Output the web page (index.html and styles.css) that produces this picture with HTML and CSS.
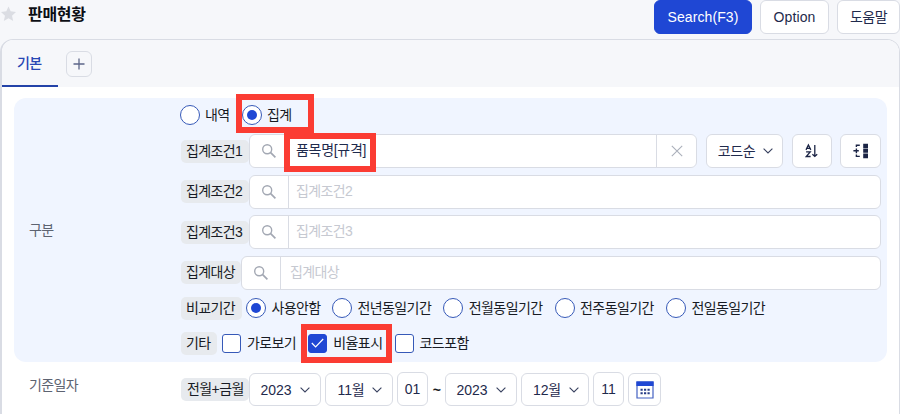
FILE: index.html
```html
<!DOCTYPE html>
<html lang="ko">
<head>
    <meta charset="UTF-8">
    <meta name="viewport" content="width=device-width, initial-scale=1.0">
    <title>판매현황</title>
    <link rel="stylesheet" href="styles.css">
</head>
<body>
    <svg class="sprite" width="0" height="0">
        <symbol id="search" viewBox="0 0 16 16">
            <circle cx="6.2" cy="6.2" r="4.5" fill="none" stroke="currentColor" stroke-width="1.4"/>
            <path d="M9.4 9.4L14.4 14.4" stroke="currentColor" stroke-width="1.7"/>
        </symbol>
        <symbol id="chevron" viewBox="0 0 10 6">
            <path d="M0.6 0.6L5 5L9.4 0.6" fill="none" stroke="currentColor" stroke-width="1.1"/>
        </symbol>
    </svg>

    <header class="page-header">
        <svg class="star" viewBox="0 0 16 16"><path d="M8.5 0.4L10.7 5.3L16 6L12 9.7L13.2 15L8.5 12.3L3.8 15L5 9.7L1 6L6.3 5.3Z" fill="#dbdde3"/></svg>
        <h1>판매현황</h1>
        <div class="header-buttons">
            <button class="btn btn-primary">Search(F3)</button>
            <button class="btn btn-option">Option</button>
            <button class="btn btn-help">도움말</button>
        </div>
    </header>

    <main class="panel">
        <nav class="tabs">
            <a class="tab">기본</a>
            <button class="btn tab-add"><svg width="12" height="12" viewBox="0 0 12 12"><path d="M6 0.5V11.5M0.5 6H11.5" stroke="#5c6689" stroke-width="1.3"/></svg></button>
        </nav>

        <section class="group">
            <div class="group-title">구분</div>
            <div class="group-body">
                <div class="row row-type">
                    <label class="choice choice-type"><span class="radio"></span>내역</label>
                    <label class="choice"><span class="radio checked"></span>집계</label>
                </div>
                <div class="row row-field">
                    <span class="badge badge-wide">집계조건1</span>
                    <div class="field field-short">
                        <span class="field-icon"><svg width="16" height="16"><use href="#search"/></svg></span>
                        <span class="field-text field-value">품목명[규격]</span>
                        <span class="field-clear"><svg width="12" height="12" viewBox="0 0 12 12"><path d="M0.8 0.8L11.2 11.2M11.2 0.8L0.8 11.2" stroke="#abb0bb" stroke-width="1.1"/></svg></span>
                    </div>
                    <button class="btn select sort-select">코드순 <svg class="chevron"><use href="#chevron"/></svg></button>
                    <button class="btn icon-btn">
                        <svg width="14" height="16" viewBox="0 0 14 16" fill="none" stroke="#1b2445">
                            <path d="M1 6.9L3.4 2L5.8 6.9M1.8 5.4H5M1.1 8.9H5.2L1.2 13.5H5.6" stroke-width="1.3"/>
                            <path d="M9.8 2V13.5M7.4 11.2L9.8 13.4L12.2 11.2" stroke-width="1.3"/>
                        </svg>
                    </button>
                    <button class="btn icon-btn">
                        <svg width="16" height="16" viewBox="0 0 16 16">
                            <path d="M6.8 2.2H3.4V4M3.4 11.6V13.4H6.8M0.4 7.8H5.8M3.4 5.4V10.2" fill="none" stroke="#1b2445" stroke-width="1.4"/>
                            <path d="M10.2 0.8H15V4.9H10.2ZM10.2 5.6H15V9.7H10.2ZM10.2 10.4H15V15.2H10.2Z" fill="#1b2445"/>
                        </svg>
                    </button>
                </div>
                <div class="row row-field">
                    <span class="badge badge-wide">집계조건2</span>
                    <div class="field">
                        <span class="field-icon"><svg width="16" height="16"><use href="#search"/></svg></span>
                        <span class="field-text placeholder">집계조건2</span>
                    </div>
                </div>
                <div class="row row-field">
                    <span class="badge badge-wide">집계조건3</span>
                    <div class="field">
                        <span class="field-icon"><svg width="16" height="16"><use href="#search"/></svg></span>
                        <span class="field-text placeholder">집계조건3</span>
                    </div>
                </div>
                <div class="row row-field">
                    <span class="badge badge-target">집계대상</span>
                    <div class="field field-target">
                        <span class="field-icon"><svg width="16" height="16"><use href="#search"/></svg></span>
                        <span class="field-text placeholder">집계대상</span>
                    </div>
                </div>
                <div class="row row-period">
                    <span class="badge badge-period">비교기간</span>
                    <label class="choice choice-none"><span class="radio checked"></span>사용안함</label>
                    <label class="choice choice-period"><span class="radio"></span>전년동일기간</label>
                    <label class="choice choice-period"><span class="radio"></span>전월동일기간</label>
                    <label class="choice choice-period"><span class="radio"></span>전주동일기간</label>
                    <label class="choice choice-period"><span class="radio"></span>전일동일기간</label>
                </div>
                <div class="row row-etc">
                    <span class="badge badge-etc">기타</span>
                    <label class="choice choice-check"><span class="checkbox"></span>가로보기</label>
                    <label class="choice choice-check"><span class="checkbox checked"><svg width="13" height="10" viewBox="0 0 13 10"><path d="M0.8 5L4.6 8.8L12.2 1" fill="none" stroke="#fff" stroke-width="1.2"/></svg></span>비율표시</label>
                    <label class="choice"><span class="checkbox"></span>코드포함</label>
                </div>
            </div>
        </section>

        <section class="date-group">
            <div class="group-title date-title">기준일자</div>
            <div class="row row-date">
                <span class="badge badge-date">전월+금월</span>
                <button class="btn select year">2023 <svg class="chevron"><use href="#chevron"/></svg></button>
                <button class="btn select month">11월 <svg class="chevron"><use href="#chevron"/></svg></button>
                <span class="day">01</span>
                <span class="tilde">~</span>
                <button class="btn select year">2023 <svg class="chevron"><use href="#chevron"/></svg></button>
                <button class="btn select month">12월 <svg class="chevron"><use href="#chevron"/></svg></button>
                <span class="day">11</span>
                <button class="btn calendar">
                    <svg width="18" height="18" viewBox="0 0 18 18">
                        <path d="M1 1H17V17H1Z" fill="#fff" stroke="#4361c2" stroke-width="1.2"/>
                        <path d="M0.4 0.4H17.6V5H0.4Z" fill="#1f47d4"/>
                        <path d="M4.5 8.7H13.8M4.5 12.2H13.8" stroke="#263c86" stroke-width="2.1" stroke-dasharray="2.2 1.3"/>
                    </svg>
                </button>
            </div>
        </section>
    </main>

    <!-- Highlight boxes -->
    <div class="mark mark-summary"></div>
    <div class="mark mark-item"></div>
    <div class="mark mark-ratio"></div>
</body>
</html>
```
FILE: styles.css
```css
* {
    margin: 0;
    padding: 0;
    box-sizing: border-box;
}

body {
    position: relative;
    width: 900px;
    height: 414px;
    overflow: hidden;
    background-color: #f6f7fa;
    color: #181b24;
    font-family: "Liberation Sans", "Noto Sans CJK KR", sans-serif;
    font-size: 14px;
    letter-spacing: -0.6px;
    line-height: 20px;
    white-space: nowrap;
}

svg {
    display: block;
    flex: none;
}

.sprite {
    position: absolute;
}

/* Header */
.page-header {
    display: flex;
    align-items: flex-start;
    height: 39px;
}

.star {
    width: 16px;
    height: 16px;
    margin-top: 6px;
}

.page-header h1 {
    margin: 5px 0 0 12px;
    font-size: 16px;
    font-weight: 700;
    letter-spacing: -0.3px;
    color: #0c0e14;
}

.header-buttons {
    display: flex;
    gap: 8px;
    margin-left: auto;
}

.btn {
    display: flex;
    align-items: center;
    justify-content: center;
    flex: none;
    height: 34px;
    border: 1px solid #d9dce4;
    border-radius: 6px;
    background-color: #fff;
    color: #1f2a4c;
    font: inherit;
    letter-spacing: inherit;
}

.btn-primary {
    width: 98px;
    border-color: #1f47d4;
    background-color: #1f47d4;
    color: #fff;
    letter-spacing: 0.1px;
}

.btn-option {
    width: 69px;
    letter-spacing: 0.1px;
}

.btn-help {
    width: 63px;
}

/* Panel and tabs */
.panel {
    height: 390px;
    border: 1px solid #d9dce4;
    border-left-width: 2px;
    border-radius: 13px;
    background-color: #fff;
    overflow: hidden;
}

.tabs {
    display: flex;
    height: 47px;
    background-color: #f6f7fa;
}

.tab {
    width: 56px;
    padding: 13px 0 0 15px;
    border-bottom: 2px solid #2443a8;
    color: #2746b4;
    font-weight: 500;
}

.tab-add {
    width: 26px;
    height: 26px;
    margin: 11px 0 0 8px;
    background-color: transparent;
}

/* Grouped options */
.group {
    display: flex;
    width: 873px;
    height: 264px;
    margin: 11px 0 0 12px;
    border-radius: 12px;
    background-color: #f0f5ff;
}

.group-title {
    width: 167px;
    padding: 122px 0 0 15px;
    color: #5d6371;
}

.group-body {
    flex: 1;
    padding-right: 6px;
}

.row {
    display: flex;
    align-items: center;
    padding-left: 1px;
}

.row-type {
    height: 34px;
    padding-left: 0;
}

.row-field {
    height: 34px;
    margin-bottom: 6.5px;
}

.row-type + .row-field {
    margin-top: 2px;
}

.badge {
    flex: none;
    height: 23px;
    padding-left: 5px;
    border-radius: 5px;
    background-color: #e7eaee;
    line-height: 23px;
}

.badge-wide {
    width: 68px;
}

.badge-target {
    width: 60px;
}

.badge-period {
    width: 61px;
    margin-right: 4px;
}

.badge-etc {
    width: 36px;
    margin-right: 5px;
}

.badge-date {
    width: 68px;
    padding-left: 6px;
}

.field {
    display: flex;
    flex: 1;
    height: 34px;
    border: 1px solid #d9dce4;
    border-radius: 6px;
    background-color: #fff;
}

.field-short {
    flex: none;
    width: 448px;
    margin-right: 9px;
}

.field-icon {
    display: flex;
    align-items: center;
    justify-content: center;
    width: 39px;
    border-right: 1px solid #d9dce4;
    color: #a3a8b3;
}

.field-text {
    flex: 1;
    padding-left: 7px;
    line-height: 31px;
    color: #1f2a4c;
}

.field-value {
    letter-spacing: -0.3px;
}

.field-target .field-text {
    padding-left: 9px;
}

.field-text.placeholder {
    color: #c6c9d1;
}

.field-clear {
    display: flex;
    align-items: center;
    justify-content: center;
    width: 40px;
    border-left: 1px solid #d9dce4;
}

.select {
    gap: 8px;
}

.chevron {
    width: 10px;
    height: 6px;
    color: #3a4360;
}

.sort-select {
    width: 77px;
    padding-left: 2px;
    letter-spacing: -0.4px;
}

.icon-btn {
    width: 40px;
    margin-left: 9px;
}

.icon-btn + .icon-btn {
    width: 41px;
    margin-left: 8px;
}

/* Radio buttons and checkboxes */
.choice {
    display: flex;
    align-items: center;
    gap: 6px;
    flex: none;
}

.choice-type {
    width: 62px;
}

.row-type .choice {
    gap: 5px;
}

.choice-none {
    width: 86px;
}

.choice-period {
    width: 111.3px;
}

.row-period .choice {
    gap: 5.5px;
}

.choice-check {
    width: 86.3px;
}

.radio {
    display: flex;
    align-items: center;
    justify-content: center;
    width: 20px;
    height: 20px;
    border: 1px solid #3659b8;
    border-radius: 50%;
    background-color: #fff;
}

.radio.checked::after {
    content: "";
    width: 10px;
    height: 10px;
    border-radius: 50%;
    background-color: #1f47d4;
}

.checkbox {
    display: flex;
    align-items: center;
    justify-content: center;
    width: 19px;
    height: 19px;
    border: 1px solid #3659b8;
    border-radius: 3px;
    background-color: #fff;
}

.checkbox.checked {
    border-color: #1f47d4;
    background-color: #1f47d4;
}

.row-period {
    height: 24px;
    margin-top: 1px;
}

.row-etc {
    height: 24px;
    margin-top: 11px;
}

/* Date row */
.date-group {
    display: flex;
    margin: 11px 0 0 12px;
}

.date-title {
    padding-top: 2px;
}

.row-date {
    height: 33px;
    padding-left: 0;
}

.row-date .btn {
    height: 33px;
}

.year {
    width: 72px;
    letter-spacing: 0;
}

.month {
    width: 68px;
    margin: 0 4px;
    padding-left: 2px;
    letter-spacing: -0.2px;
}

.day {
    width: 31px;
    height: 34px;
    margin-bottom: 2px;
    border: 1px solid #d9dce4;
    border-radius: 6px;
    background-color: #fff;
    color: #1f2a4c;
    letter-spacing: 0;
    line-height: 32px;
    text-align: center;
}

.tilde {
    width: 17px;
    font-weight: 700;
    text-align: center;
}

.calendar {
    width: 33px;
    margin-left: 4px;
}

/* Highlight boxes */
.mark {
    position: absolute;
    height: 39px;
    border: 6px solid #fb3c33;
}

.mark-summary {
    left: 236px;
    top: 94px;
    width: 78px;
}

.mark-item {
    left: 284px;
    top: 133px;
    width: 92px;
}

.mark-ratio {
    left: 301px;
    top: 324px;
    width: 91px;
}
```
